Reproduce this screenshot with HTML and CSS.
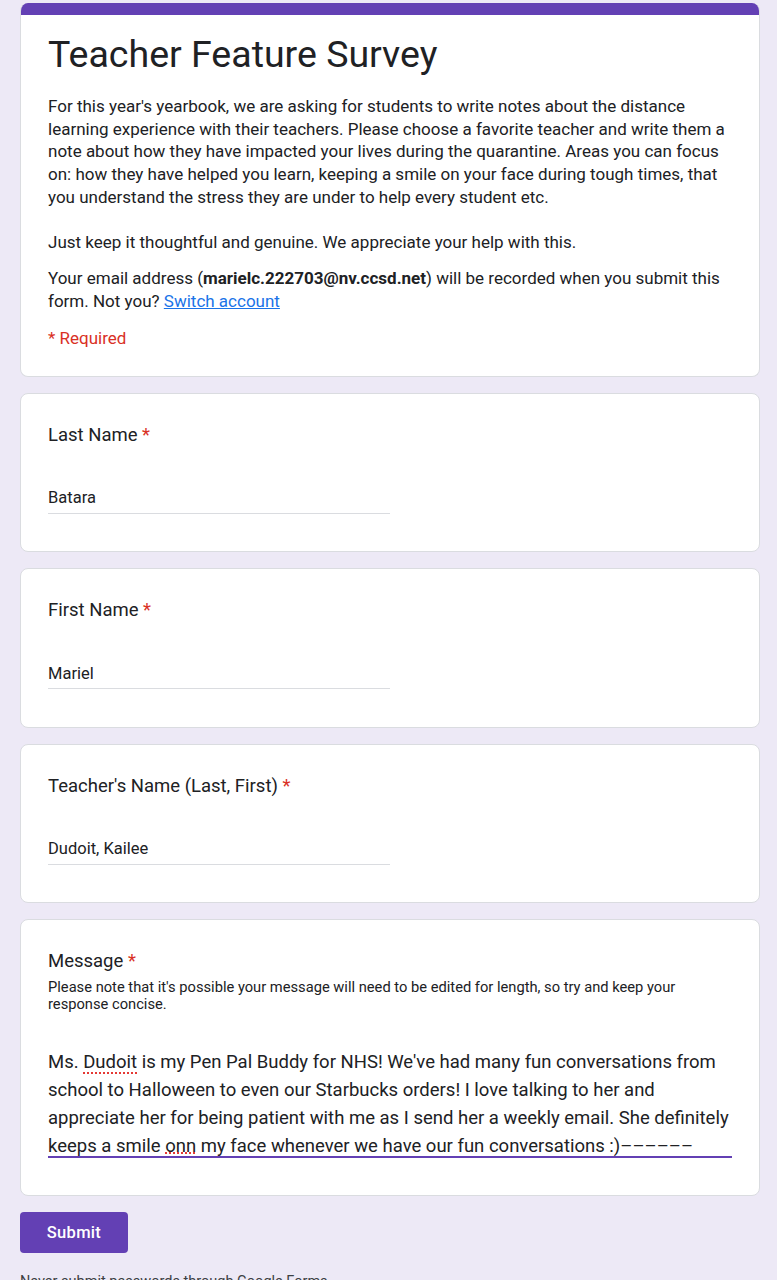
FILE: index.html
```html
<!DOCTYPE html>
<html lang="en">
<head>
<meta charset="utf-8">
<title>Teacher Feature Survey</title>
<link rel="stylesheet" href="styles.css">
</head>
<body>
<div class="page">
  <div class="card header-card">
    <div class="bar"></div>
    <div class="header-body">
      <h1 class="title">Teacher Feature Survey</h1>
      <p class="desc">For this year's yearbook, we are asking for students to write notes about the distance learning experience with their teachers. Please choose a favorite teacher and write them a note about how they have impacted your lives during the quarantine. Areas you can focus on: how they have helped you learn, keeping a smile on your face during tough times, that you understand the stress they are under to help every student etc.<br><br>Just keep it thoughtful and genuine. We appreciate your help with this.</p>
      <p class="email">Your email address (<b>marielc.222703@nv.ccsd.net</b>) will be recorded when you submit this form. Not you? <a class="link" href="#">Switch account</a></p>
      <p class="required">* Required</p>
    </div>
  </div>

  <div class="card question">
    <div class="q-title">Last Name <span class="star">*</span></div>
    <div class="answer">Batara</div>
  </div>

  <div class="card question">
    <div class="q-title">First Name <span class="star">*</span></div>
    <div class="answer">Mariel</div>
  </div>

  <div class="card question">
    <div class="q-title">Teacher's Name (Last, First) <span class="star">*</span></div>
    <div class="answer">Dudoit, Kailee</div>
  </div>

  <div class="card question msg-card">
    <div class="q-title">Message <span class="star">*</span></div>
    <div class="help">Please note that it's possible your message will need to be edited for length, so try and keep your response concise.</div>
    <div class="message">Ms. <span class="spell">Dudoit</span> is my Pen Pal Buddy for NHS! We've had many fun conversations from<br>school to Halloween to even our Starbucks orders! I love talking to her and<br>appreciate her for being patient with me as I send her a weekly email. She definitely<br>keeps a smile <span class="spell spell-low">onn</span> my face whenever we have our fun conversations :)––––––</div>
  </div>

  <button class="submit" type="button">Submit</button>
  <p class="footer-note">Never submit passwords through Google Forms.</p>
</div>
</body>
</html>
```

FILE: styles.css
```css
body {
  margin: 0;
  background: #ede9f6;
  font-family: Roboto, "Liberation Sans", Arial, sans-serif;
  color: #202124;
}

.page {
  width: 740px;
  margin-left: 20px;
  padding-top: 3px;
}

.card {
  background: #fff;
  border: 1px solid #dadce0;
  border-radius: 8px;
  margin-bottom: 16px;
}

.header-card {
  border-top: none;
  overflow: hidden;
}

.bar {
  height: 12px;
  background: #6340b4;
}

.header-body {
  padding: 17px 27px 26px;
}

.title {
  margin: 0;
  font-size: 37.5px;
  line-height: 44px;
  font-weight: 400;
}

.desc {
  margin: 19px 0 0;
  font-size: 17px;
  line-height: 22.7px;
}

.email {
  margin: 13px 0 0;
  font-size: 17px;
  line-height: 22.7px;
}

.email b {
  font-weight: 700;
}

.link {
  color: #1a73e8;
  text-decoration: underline;
}

.required {
  margin: 14.6px 0 0;
  font-size: 17px;
  line-height: 23px;
  color: #d93025;
}

.question {
  padding: 29px 27px 37.5px;
}

.msg-card {
  padding-bottom: 37px;
}

.q-title {
  font-size: 18.5px;
  line-height: 24px;
}

.star {
  color: #d93025;
}

.answer {
  margin-top: 39.5px;
  width: 342px;
  font-size: 16.5px;
  line-height: 24px;
  padding-bottom: 2.5px;
  border-bottom: 1px solid #dadce0;
}

.help {
  margin-top: 6px;
  font-size: 14.7px;
  line-height: 17px;
}

.message {
  margin-top: 34px;
  padding-top: 2px;
  height: 107px;
  font-size: 18.5px;
  line-height: 27.7px;
  border-bottom: 2px solid #6340b4;
  white-space: nowrap;
}

.spell {
  text-decoration: underline dotted #e53935;
  text-decoration-thickness: 2px;
  text-underline-offset: 4px;
}

.spell-low {
  text-underline-offset: 1px;
}

.submit {
  display: block;
  width: 108px;
  height: 41px;
  border: none;
  border-radius: 4px;
  background: #6340b4;
  color: #fff;
  font-family: Roboto, "Liberation Sans", Arial, sans-serif;
  font-size: 16.5px;
  font-weight: 500;
  letter-spacing: 0.3px;
  padding: 0;
}

.footer-note {
  margin: 19px 0 0;
  font-size: 14.5px;
  line-height: 20px;
  color: #3c4043;
}
```
